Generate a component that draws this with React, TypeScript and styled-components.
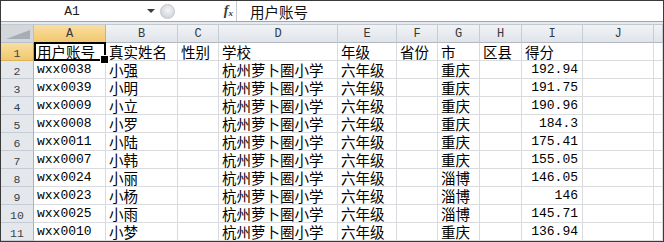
import React from "react";
import styled, { createGlobalStyle } from "styled-components";

const GlobalStyle = createGlobalStyle`
  html, body {
    margin: 0;
    padding: 0;
    background: #ffffff;
  }
  * {
    box-sizing: border-box;
  }
`;

const MONO = `"Liberation Mono", "DejaVu Sans Mono", monospace`;
const CJK = `"Noto Sans CJK SC", "Noto Sans", sans-serif`;
const GRID_LINE = "#d9dbde";

const COLUMNS = [
  { key: "A", width: 72 },
  { key: "B", width: 72 },
  { key: "C", width: 41 },
  { key: "D", width: 119 },
  { key: "E", width: 59 },
  { key: "F", width: 41 },
  { key: "G", width: 42 },
  { key: "H", width: 42 },
  { key: "I", width: 61 },
  { key: "J", width: 71 },
];

const HEADER_ROW = ["用户账号", "真实姓名", "性别", "学校", "年级", "省份", "市", "区县", "得分", ""];

const records = [
  ["wxx0038", "小强", "重庆", "192.94"],
  ["wxx0039", "小明", "重庆", "191.75"],
  ["wxx0009", "小立", "重庆", "190.96"],
  ["wxx0008", "小罗", "重庆", "184.3"],
  ["wxx0011", "小陆", "重庆", "175.41"],
  ["wxx0007", "小韩", "重庆", "155.05"],
  ["wxx0024", "小丽", "淄博", "146.05"],
  ["wxx0023", "小杨", "淄博", "146"],
  ["wxx0025", "小雨", "淄博", "145.71"],
  ["wxx0010", "小梦", "重庆", "136.94"],
];

const Frame = styled.div`
  width: 664px;
  height: 242px;
  border: 1px solid #3a3a3a;
  display: flex;
  flex-direction: column;
  overflow: hidden;
  background: #ffffff;
`;

const FormulaBar = styled.div`
  height: 20px;
  display: flex;
  align-items: center;
  background: #ffffff;
`;

const NameBox = styled.div`
  width: 142px;
  text-align: center;
  font-family: ${MONO};
  font-size: 13px;
  color: #1e1e1e;
`;

const DropArrow = styled.div`
  width: 16px;
  height: 20px;
  display: flex;
  align-items: center;
  justify-content: center;

  &::after {
    content: "";
    border-left: 4px solid transparent;
    border-right: 4px solid transparent;
    border-top: 4px solid #3c3c3c;
  }
`;

const FxGroup = styled.div`
  width: 77px;
  height: 19px;
  display: flex;
  align-items: center;
  justify-content: space-between;
  padding: 0 3px 0 1px;
`;

const Grip = styled.div`
  width: 15px;
  height: 15px;
  border-radius: 50%;
  border: 1px solid #bfc4ca;
  background: radial-gradient(circle at 55% 40%, #f4f5f7 0%, #d3d7dc 70%, #c3c8ce 100%);
`;

const FxLabel = styled.span`
  font-family: "Liberation Serif", serif;
  font-style: italic;
  font-weight: bold;
  font-size: 14px;
  color: #3b3b3b;

  sub {
    font-size: 9px;
    vertical-align: -1px;
  }
`;

const FormulaInput = styled.div`
  flex: 1;
  height: 20px;
  border-left: 1px solid #c8ccd1;
  padding-left: 13px;
  display: flex;
  align-items: center;
  font-family: ${CJK};
  font-size: 14.5px;
  color: #111111;
`;

const Band = styled.div`
  height: 4px;
  border-top: 1px solid #9ea5ae;
  border-bottom: 1px solid #c3c9d0;
  background: #e6e9ed;
`;

const Sheet = styled.div`
  display: grid;
  grid-template-columns: 33px ${COLUMNS.map((c) => `${c.width}px`).join(" ")} 1fr;
  grid-template-rows: 18px repeat(11, 18px);
`;

const Corner = styled.div`
  position: relative;
  background: #d3d7dc;
  border-right: 1px solid #b9c0c8;
  border-bottom: 1px solid #b9c0c8;

  &::after {
    content: "";
    position: absolute;
    right: 3px;
    bottom: 3px;
    width: 24px;
    height: 9px;
    background: #a7adb4;
    clip-path: polygon(100% 0, 100% 100%, 0 100%);
  }
`;

const ColHeader = styled.div<{ $active?: boolean }>`
  display: flex;
  align-items: center;
  justify-content: center;
  font-family: ${MONO};
  font-size: 12px;
  color: #34393f;
  background: ${(p) =>
    p.$active
      ? "linear-gradient(#f9dea0, #f2c86f)"
      : "linear-gradient(#f1f3f6, #e0e4e9)"};
  border-right: 1px solid ${(p) => (p.$active ? "#d9b25a" : "#c6ccd3")};
  border-bottom: 1px solid ${(p) => (p.$active ? "#d49c3a" : "#b1b8c1")};
`;

const RowHeader = styled.div<{ $active?: boolean }>`
  display: flex;
  align-items: center;
  justify-content: center;
  padding-top: 3px;
  font-family: ${MONO};
  font-size: 11.5px;
  color: #3a3f45;
  background: ${(p) =>
    p.$active ? "linear-gradient(#f9dea0, #f2c86f)" : "#e4e8ec"};
  border-right: 1px solid ${(p) => (p.$active ? "#d49c3a" : "#a9b2bc")};
  border-bottom: 1px solid ${(p) => (p.$active ? "#d9b25a" : "#c6ccd3")};
`;

const Cell = styled.div<{ $right?: boolean }>`
  position: relative;
  display: flex;
  align-items: flex-end;
  justify-content: ${(p) => (p.$right ? "flex-end" : "flex-start")};
  padding: 0 ${(p) => (p.$right ? "4px" : "0")} 0 ${(p) => (p.$right ? "0" : "3px")};
  border-right: 1px solid ${GRID_LINE};
  border-bottom: 1px solid ${GRID_LINE};
  background: #ffffff;
`;

const CellText = styled.span<{ $mono?: boolean }>`
  display: block;
  font-family: ${(p) => (p.$mono ? MONO : CJK)};
  font-size: ${(p) => (p.$mono ? "13px" : "14.5px")};
  line-height: ${(p) => (p.$mono ? "17px" : "17px")};
  color: #000000;
  white-space: nowrap;
`;

const Selection = styled.div`
  position: absolute;
  top: -1px;
  left: 0;
  right: -1px;
  bottom: -1px;
  border: 2px solid #000000;
  pointer-events: none;
  z-index: 2;

  &::after {
    content: "";
    position: absolute;
    right: -5px;
    bottom: -5px;
    width: 7px;
    height: 7px;
    background: #000000;
    border: 1px solid #ffffff;
  }
`;

function rowValues(r: string[]): string[] {
  const [id, name, city, score] = r;
  return [id, name, "", "杭州萝卜圈小学", "六年级", "", city, "", score, ""];
}

export default function App() {
  const rows = [HEADER_ROW, ...records.map(rowValues)];

  return (
    <>
      <GlobalStyle />
      <Frame>
        <FormulaBar>
          <NameBox>A1</NameBox>
          <DropArrow />
          <FxGroup>
            <Grip />
            <FxLabel>
              f<sub>x</sub>
            </FxLabel>
          </FxGroup>
          <FormulaInput>用户账号</FormulaInput>
        </FormulaBar>
        <Band />
        <Sheet>
          <Corner />
          {COLUMNS.map((c) => (
            <ColHeader key={c.key} $active={c.key === "A"}>
              {c.key}
            </ColHeader>
          ))}
          <ColHeader />

          {rows.map((values, ri) => (
            <React.Fragment key={ri}>
              <RowHeader $active={ri === 0}>{ri + 1}</RowHeader>
              {values.map((v, ci) => {
                const mono = ri > 0 && (ci === 0 || ci === 8);
                const right = ri > 0 && ci === 8;
                return (
                  <Cell key={ci} $right={right}>
                    {v && <CellText $mono={mono}>{v}</CellText>}
                    {ri === 0 && ci === 0 && <Selection />}
                  </Cell>
                );
              })}
              <Cell />
            </React.Fragment>
          ))}
        </Sheet>
      </Frame>
    </>
  );
}
